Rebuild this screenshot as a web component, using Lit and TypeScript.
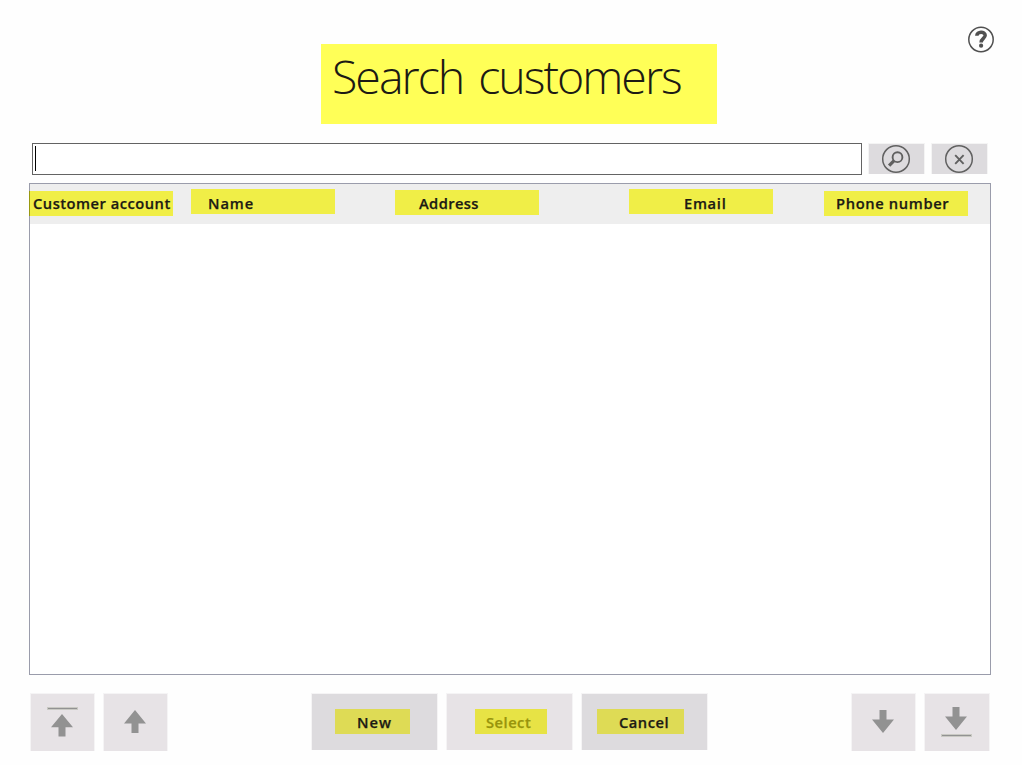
import { LitElement, html, svg, css } from "lit";
import { customElement } from "lit/decorators.js";
import { styleMap } from "lit/directives/style-map.js";

interface Column {
  label: string;
  gap: number;
  top: number;
  indent: number;
  spacing: number;
}

const COLUMNS: Column[] = [
  { label: "Customer account", gap: 0, top: 8, indent: 4, spacing: 0.5 },
  { label: "Name", gap: 18, top: 6, indent: 17, spacing: 0.9 },
  { label: "Address", gap: 60, top: 7, indent: 24, spacing: 0.4 },
  { label: "Email", gap: 90, top: 6, indent: 55, spacing: 0.7 },
  { label: "Phone number", gap: 51, top: 8, indent: 12, spacing: 0.65 },
];

const upArrow = svg`<path d="M0 13.5L11 0l11 13.5h-7.5V23h-7v-9.500z" />`;
const downArrow = svg`<path d="M0 9.500L11 23 22 9.500h-7.5V0h-7v9.500z" />`;

@customElement("app-root")
export class AppRoot extends LitElement {
  static styles = css`
    :host {
      display: block;
      width: 1022px;
      height: 765px;
      background: #fefefe;
      font-family: "Open Sans", "Noto Sans", sans-serif;
      color: #1c1a14;
      overflow: hidden;
    }
    * {
      box-sizing: border-box;
    }
    .screen {
      display: flex;
      flex-direction: column;
      height: 765px;
      padding: 26px 31px 0 29px;
    }
    .top {
      display: flex;
      height: 117px;
      padding-left: 292px;
      justify-content: space-between;
    }
    .title {
      margin: 18px 0 0;
      width: 396px;
      height: 80px;
      padding-left: 11px;
      background: #ffff57;
      font-size: 46.5px;
      font-weight: 300;
      line-height: 64px;
      letter-spacing: -2px;
      word-spacing: 5px;
      white-space: nowrap;
    }
    .help {
      width: 28px;
      height: 28px;
      margin-right: -4px;
    }
    svg {
      display: block;
    }
    .search {
      display: flex;
      height: 40px;
      padding-left: 3px;
    }
    .field {
      width: 830px;
      height: 32px;
      border: 1px solid #636363;
      background: #fff;
      padding: 2px;
    }
    .caret {
      width: 1px;
      height: 25px;
      background: #000;
    }
    .tool {
      width: 57px;
      height: 31px;
      margin-left: 6px;
      border: 1px solid #f4f4f4;
      border-bottom: 0;
      background: #dddbde;
      display: grid;
      place-items: center;
      padding-right: 1px;
    }
    .table {
      height: 492px;
      border: 1px solid #9a9cab;
      background: #fff;
    }
    .head {
      display: flex;
      height: 40px;
      margin-left: -1px;
      background: linear-gradient(#9a9cab, #9a9cab) 0 0 / 1px 100% no-repeat #eee;
    }
    .cell {
      width: 144px;
      height: 25px;
      flex: none;
      background: #f0ee47;
      font-size: 14.7px;
      font-weight: 600;
      -webkit-text-stroke: 0.25px currentColor;
      white-space: nowrap;
    }
    .cell:first-child {
      border-left: 1px solid #99990f;
    }
    .actions {
      display: flex;
      padding-top: 18px;
      margin-left: 1px;
    }
    .nav,
    .action {
      border: 1px solid #f5f4f5;
      border-bottom: 0;
      display: flex;
      flex: none;
    }
    .nav {
      width: 65px;
      height: 58px;
      background: #e7e3e6;
      margin-right: 8px;
    }
    .nav svg {
      flex: none;
      fill: #929292;
    }
    .nav .halo {
      fill: #c9c9c3;
    }
    .nav.last {
      width: 66px;
      margin-right: 0;
    }
    .action {
      width: 127px;
      height: 57px;
      background: #dddbde;
      margin-right: 8px;
      padding-top: 15px;
    }
    .action.off {
      background: #e7e3e6;
    }
    .mark {
      height: 25px;
      background: #dedb55;
      font-size: 14.7px;
      font-weight: 600;
      -webkit-text-stroke: 0.25px currentColor;
      line-height: 27px;
      letter-spacing: 0.5px;
      white-space: nowrap;
    }
    .off .mark {
      background: #e7e345;
      color: #98940c;
    }
    .new {
      width: 75px;
      margin-left: 23px;
      padding-left: 22px;
      letter-spacing: 1px;
    }
    .select {
      width: 72px;
      margin-left: 28px;
      padding-left: 11px;
    }
    .cancel {
      width: 87px;
      margin-left: 15px;
      padding-left: 22px;
    }
    .group {
      display: flex;
    }
    .center,
    .right {
      margin-left: 135px;
    }
  `;

  private column(c: Column) {
    return html`<div
      class="cell"
      style=${styleMap({
        marginLeft: `${c.gap}px`,
        marginTop: `${c.top - 1}px`,
        paddingLeft: `${c.indent - (c.gap ? 0 : 1)}px`,
        lineHeight: `${25 + (8 - c.top) * 2}px`,
        letterSpacing: `${c.spacing}px`,
      })}
    >${c.label}</div>`;
  }

  render() {
    return html`
      <div class="screen">
        <div class="top">
          <h1 class="title">Search customers</h1>
          <svg class="help" viewBox="0 0 28 28" fill="none" stroke="#505050">
            <circle cx="14" cy="13.500" r="12.200" stroke-width="1.500" />
            <path d="M9.800 9.800C9.800 5.200 18.200 5 18.200 9.300C18.200 12.300 14.100 12.500 14.100 16.500" stroke-width="3.500" />
            <circle cx="14.100" cy="19.700" r="2.100" fill="#505050" stroke="none" />
          </svg>
        </div>
        <div class="search">
          <div class="field"><div class="caret"></div></div>
          <div class="tool">
            <svg width="30" height="30" viewBox="0 0 30 30" fill="none" stroke="#606060">
              <circle cx="15" cy="15" r="13.300" stroke-width="1.500" />
              <circle cx="16.500" cy="13.200" r="4.900" stroke-width="1.900" />
              <path d="M13.100 16.700l-5 5" stroke-width="3.200" />
            </svg>
          </div>
          <div class="tool">
            <svg width="30" height="30" viewBox="0 0 30 30" fill="none" stroke="#606060">
              <circle cx="15" cy="15" r="13.300" stroke-width="1.500" />
              <path d="M11.200 11.200l8.400 8.600M19.600 11.200l-8.400 8.600" stroke-width="1.900" />
            </svg>
          </div>
        </div>
        <div class="table">
          <div class="head">${COLUMNS.map((c) => this.column(c))}</div>
        </div>
        <div class="actions">
          <div class="group">
            <div class="nav">
              <svg width="63" height="57" viewBox="0 0 63 57">
                <path class="halo" d="M16 13h31v3H16z" />
                <path d="M17 14h29v1H17z" />
                <g transform="translate(20 20) scale(1 .98)">${upArrow}</g>
              </svg>
            </div>
            <div class="nav">
              <svg width="63" height="57" viewBox="0 0 63 57">
                <g transform="translate(20 16)">${upArrow}</g>
              </svg>
            </div>
          </div>
          <div class="group center">
            <div class="action"><div class="mark new">New</div></div>
            <div class="action off"><div class="mark select">Select</div></div>
            <div class="action"><div class="mark cancel">Cancel</div></div>
          </div>
          <div class="group right">
            <div class="nav">
              <svg width="63" height="57" viewBox="0 0 63 57">
                <g transform="translate(20 16)">${downArrow}</g>
              </svg>
            </div>
            <div class="nav last">
              <svg width="63" height="57" viewBox="0 0 63 57">
                <g transform="translate(20 13)">${downArrow}</g>
                <path class="halo" d="M16 40h31v3H16z" />
                <path d="M17 41h29v1H17z" />
              </svg>
            </div>
          </div>
        </div>
      </div>
    `;
  }
}
